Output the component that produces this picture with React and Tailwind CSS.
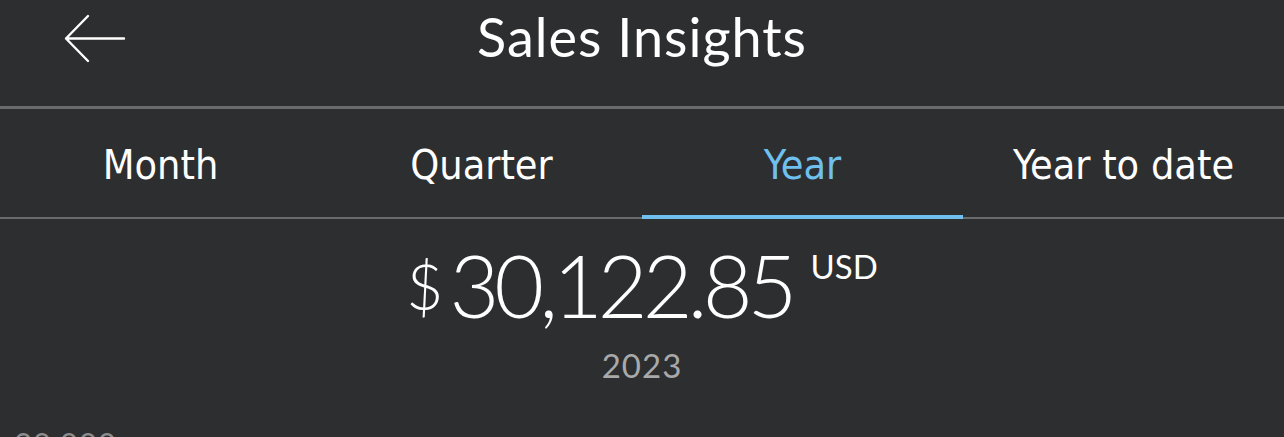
import React from 'react';

const tabs = ['Month', 'Quarter', 'Year', 'Year to date'];

export default function App() {
  const active = 2;
  return (
    <div className="w-[1284px] h-[437px] overflow-hidden bg-[#2d2e30] text-white" style={{ fontFamily: 'Lato, "Open Sans", sans-serif' }}>
      {/* header */}
      <div className="relative h-[109px] flex items-center justify-center border-b-[3px] border-[#6b6b6c]">
        <svg className="absolute left-[64px] top-[14px]" width="62" height="50" viewBox="0 0 62 50" fill="none">
          <path d="M2 24.5 H60 M2 24.5 L24 2 M2 24.5 L24 47" stroke="white" strokeWidth="2.4" strokeLinecap="round" strokeLinejoin="round" />
        </svg>
        <h1 className="text-[54px] leading-none pb-[32px] tracking-[1px]">Sales Insights</h1>
      </div>

      {/* tabs */}
      <div className="grid grid-cols-4 h-[110px] border-b-2 border-[#6b6b6c]">
        {tabs.map((t, i) => (
          <div key={t} className="relative flex items-center justify-center">
            <span
              className={`text-[41px] leading-none pt-[4px] ${i === active ? 'text-[#6fc0ef]' : 'text-white'}`}
              style={{ fontFamily: '"DejaVu Sans Condensed", "DejaVu Sans", sans-serif', fontStretch: 'condensed' }}
            >
              {t}
            </span>
            {i === active && <div className="absolute left-0 right-0 bottom-[-2px] h-[4px] bg-[#6fc0ef]" />}
          </div>
        ))}
      </div>

      {/* amount */}
      <div className="flex flex-col items-center pt-[23px]">
        <div className="flex items-start">
          <span className="text-[64px] font-light leading-none mt-[12px] mr-[6px]">$</span>
          <span className="text-[86px] font-light leading-none tracking-[-5px]">30,122.85</span>
          <span className="text-[33px] leading-none ml-[18px] mt-[8px]">USD</span>
        </div>
        <div className="text-[33px] text-[#a9a9aa] leading-none mt-[21px] tracking-[1px]">2023</div>
      </div>

      <div className="pl-[14px] mt-[46px] text-[31px] text-[#8d8d8e] leading-none tracking-[1px]">30,000</div>
    </div>
  );
}
